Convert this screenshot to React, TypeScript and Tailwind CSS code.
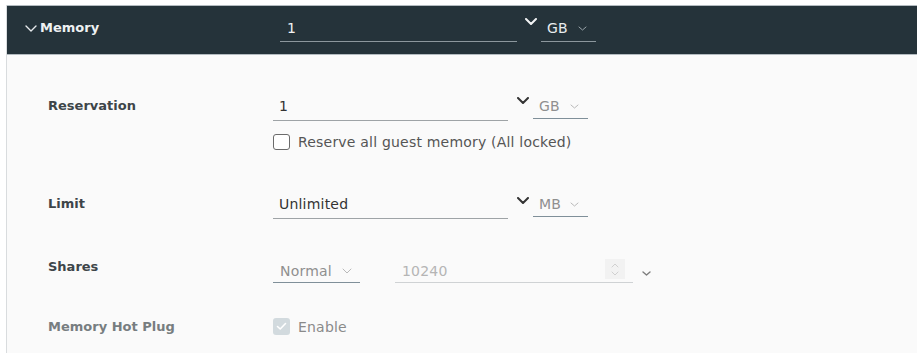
import React from 'react';

// chevron used beside inputs (bold) and inside selects (thin)
function Chevron({ w = 12, h = 7, stroke = '#333', sw = 2, up = false }: { w?: number; h?: number; stroke?: string; sw?: number; up?: boolean }) {
    const pts = up
        ? `1,${h - 1} ${w / 2},1 ${w - 1},${h - 1}`
        : `1,1 ${w / 2},${h - 1} ${w - 1},1`;
    return (
        <svg width={w} height={h} viewBox={`0 0 ${w} ${h}`} fill="none" className="block shrink-0">
            <polyline points={pts} stroke={stroke} strokeWidth={sw} strokeLinecap="round" strokeLinejoin="round" />
        </svg>
    );
}

function UnitSelect({ value, dark = false }: { value: string; dark?: boolean }) {
    return (
        <div
            className={`w-[55px] flex items-center justify-between pl-[6px] pr-[9px] leading-[16px] border-b ${dark
                ? 'pb-[5px] border-[#8c979d] text-[#e9edef]'
                : 'pb-[4px] border-[#7f8f99] text-[#8f8f8f]'
                }`}
        >
            <span>{value}</span>
            <Chevron w={9} h={5} stroke={dark ? '#9aa4aa' : '#b9b9b9'} sw={1} />
        </div>
    );
}

function Checkbox({ checked = false, disabled = false }: { checked?: boolean; disabled?: boolean }) {
    if (checked) {
        return (
            <span className={`w-[17px] h-[17px] rounded-[3px] flex items-center justify-center ${disabled ? 'bg-[#d2dade]' : 'bg-[#0072a3]'}`}>
                <svg width="11" height="9" viewBox="0 0 11 9" fill="none">
                    <polyline points="1.5,4.5 4.2,7 9.5,1.5" stroke="#fff" strokeWidth="1.6" strokeLinecap="round" strokeLinejoin="round" />
                </svg>
            </span>
        );
    }
    return <span className="w-[17px] h-[16px] rounded-[3px] border-[1.5px] border-[#6b6b6b] bg-white block" />;
}

export default function App() {
    return (
        <div className="w-[917px] h-[353px] overflow-hidden bg-white pt-[5px] pl-[6px] font-['DejaVu_Sans','Open_Sans',sans-serif] text-[14px] tracking-[0.2px]">
            <div className="h-full border-l border-[#d9dcde] bg-[#fafafa]">

                {/* HEADER */}
                <div className="h-[50px] border-y border-[#b3bbc0] bg-[#25333a] flex items-start pt-[14px]">
                    <div className="w-[273px] pl-[18px] flex items-center gap-[3px] leading-[16px] text-[13px] tracking-normal text-[#eef1f2] font-bold">
                        <Chevron w={12} h={7} stroke="#e6eaec" sw={1.4} />
                        <span>Memory</span>
                    </div>
                    <div className="w-[237px] pl-[7px] pb-[5px] leading-[16px] border-b border-[#8c979d] text-[#f1f3f4]">1</div>
                    <div className="ml-[8px] -mt-[2px]">
                        <Chevron w={12} h={7} stroke="#f1f3f4" sw={2} />
                    </div>
                    <div className="ml-[4px]">
                        <UnitSelect value="GB" dark />
                    </div>
                </div>

                {/* BODY */}
                <div className="pl-[41px] pt-[43px]">

                    {/* RESERVATION */}
                    <div className="flex items-start">
                        <div className="w-[225px] leading-[16px] text-[13px] tracking-normal font-bold text-[#3d4549]">Reservation</div>
                        <div className="flex flex-col">
                            <div className="flex items-start">
                                <div className="w-[235px] pl-[6px] pb-[6px] leading-[16px] border-b border-[#9ea3a6] text-[#333]">1</div>
                                <div className="ml-[9px] -mt-[1px]">
                                    <Chevron />
                                </div>
                                <div className="ml-[4px]">
                                    <UnitSelect value="GB" />
                                </div>
                            </div>
                            <div className="mt-[13px] flex items-center gap-[8px] leading-[16px] text-[#555]">
                                <Checkbox />
                                <span>Reserve all guest memory (All locked)</span>
                            </div>
                        </div>
                    </div>

                    {/* LIMIT */}
                    <div className="mt-[46px] flex items-start">
                        <div className="w-[225px] leading-[16px] text-[13px] tracking-normal font-bold text-[#3d4549]">Limit</div>
                        <div className="flex items-start">
                            <div className="w-[235px] pl-[6px] pb-[6px] leading-[16px] border-b border-[#9ea3a6] text-[#333]">Unlimited</div>
                            <div className="ml-[9px] mt-[1px]">
                                <Chevron />
                            </div>
                            <div className="ml-[4px]">
                                <UnitSelect value="MB" />
                            </div>
                        </div>
                    </div>

                    {/* SHARES */}
                    <div className="mt-[40px] flex items-start">
                        <div className="w-[225px] leading-[16px] text-[13px] tracking-normal font-bold text-[#3d4549]">Shares</div>
                        <div className="pt-[4px] flex items-start">
                            <div className="w-[87px] flex items-center justify-between pl-[7px] pr-[8px] pb-[3px] leading-[16px] border-b border-[#7f8f99] text-[#8f8f8f]">
                                <span>Normal</span>
                                <Chevron w={10} h={6} stroke="#b9b9b9" sw={1} />
                            </div>
                            <div className="ml-[35px] w-[238px] flex items-start justify-between pl-[7px] pr-[8px] pb-[3px] leading-[16px] border-b border-[#cfd2d4] text-[#b5b5b5]">
                                <span>10240</span>
                                <div className="-mt-[4px] w-[20px] h-[20px] bg-[#f2f2f2] flex flex-col items-center justify-center gap-[3px]">
                                    <Chevron w={8} h={5} stroke="#d0d0d0" sw={1} up />
                                    <Chevron w={8} h={5} stroke="#d0d0d0" sw={1} />
                                </div>
                            </div>
                            <div className="ml-[9px] mt-[8px]">
                                <Chevron w={9} h={5} stroke="#7d7d7d" sw={1.4} />
                            </div>
                        </div>
                    </div>

                    {/* MEMORY HOT PLUG */}
                    <div className="mt-[36px] flex items-start">
                        <div className="w-[225px] leading-[16px] text-[13px] tracking-normal font-bold text-[#777d80]">Memory Hot Plug</div>
                        <div className="-mt-[1px] flex items-center gap-[8px] leading-[16px] text-[#8a8a8a]">
                            <Checkbox checked disabled />
                            <span>Enable</span>
                        </div>
                    </div>
                </div>
            </div>
        </div>
    );
}
